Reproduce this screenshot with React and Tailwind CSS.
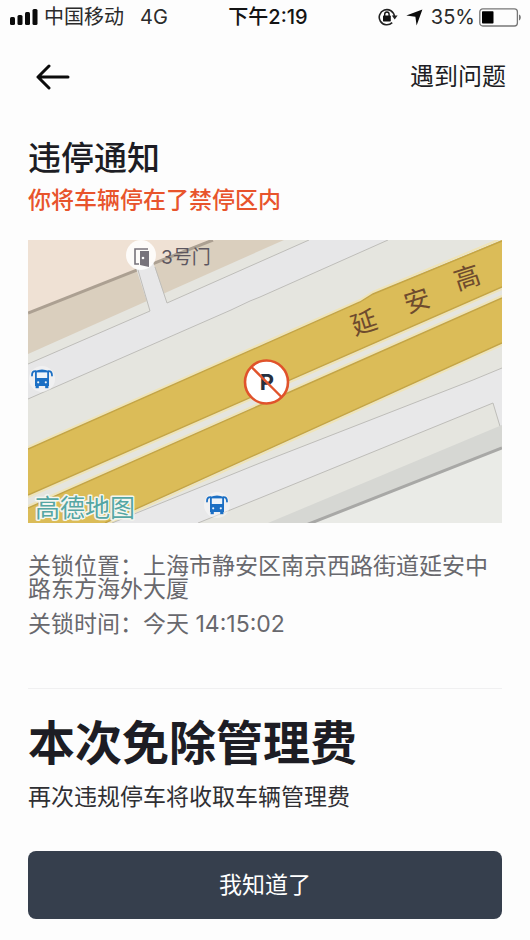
import React from "react";

const CJK = "font-[Inter,'Noto_Sans_CJK_SC',sans-serif]";

function SignalBars() {
  return (
    <svg width="28" height="18" viewBox="0 0 28 18" fill="#0b0b0b" aria-hidden="true">
      <rect x="0" y="9" width="5" height="8" rx="1.5" />
      <rect x="7.5" y="7" width="5" height="10" rx="1.5" />
      <rect x="15" y="4" width="5" height="13" rx="1.5" />
      <rect x="22.5" y="1" width="5" height="16" rx="1.5" />
    </svg>
  );
}

function RotationLock() {
  return (
    <svg width="20" height="18" viewBox="0 0 20 18" fill="none" aria-hidden="true">
      <path d="M14.2 14.6A7.6 7.6 0 1 1 16.4 8.4" stroke="#222" strokeWidth="1.6" />
      <path d="M13.8 7.6h5.8l-2.9 4z" fill="#222" />
      <rect x="5" y="7.6" width="7.8" height="5.8" rx="0.6" fill="#111" />
      <path d="M6.7 8V6.2a2.2 2.2 0 0 1 4.4 0V8" stroke="#111" strokeWidth="1.4" />
    </svg>
  );
}

function LocationArrow() {
  return (
    <svg width="17" height="17" viewBox="0 0 17 17" fill="#0b0b0b" aria-hidden="true">
      <path d="M0.3 6.6 16.4 0.4 10.6 16.4 9.4 7.8z" />
    </svg>
  );
}

function Battery() {
  return (
    <svg width="43" height="19" viewBox="0 0 43 19" fill="none" aria-hidden="true">
      <rect x="0.8" y="0.8" width="37.6" height="17.2" rx="3" stroke="#777" strokeWidth="1.3" />
      <rect x="3" y="3.2" width="11.5" height="12.4" rx="0.8" fill="#000" />
      <path d="M40 6.6c2.4.6 2.4 5.2 0 5.8z" fill="#777" />
    </svg>
  );
}

function BackArrow() {
  return (
    <svg width="34" height="26" viewBox="0 0 34 26" fill="none" stroke="#0b0b0b" strokeWidth="3" strokeLinecap="round" strokeLinejoin="round" aria-hidden="true">
      <path d="M13 2 2 13l11 11M2 13h30" />
    </svg>
  );
}

function Bus({ x, y }) {
  return (
    <g transform={`translate(${x} ${y})`}>
      <circle cx="11" cy="10" r="13" fill="#fff" fillOpacity="0.4" />
      <path d="M4 2Q11-1 18 2V17H4z" fill="#1b6fc4" />
      <path d="M4.5 2.2C2 2.2 1 3.2 1 6.5M17.5 2.2C20 2.2 21 3.2 21 6.5" stroke="#1b6fc4" strokeWidth="1.8" fill="none" strokeLinecap="round" />
      <rect x="5.8" y="3.4" width="10.4" height="5.6" fill="#eef4fa" />
      <circle cx="7.2" cy="13.3" r="1.1" fill="#eef4fa" />
      <circle cx="14.8" cy="13.3" r="1.1" fill="#eef4fa" />
      <rect x="4.6" y="16" width="3.2" height="3.2" fill="#1b6fc4" />
      <rect x="14.2" y="16" width="3.2" height="3.2" fill="#1b6fc4" />
    </g>
  );
}

function ParkingMap() {
  return (
    <svg viewBox="0 0 474 283" className={`block w-full h-auto ${CJK}`} role="img" aria-label="停车位置地图">
      <rect width="474" height="283" fill="#e5e5df" />

      {/* building, top left */}
      <path d="M0 0H256L0 114z" fill="#dacfbe" />
      <path d="M0 0H187L0 74z" fill="#efe1d4" />
      <path d="M0 73 185 0" stroke="#aca092" strokeWidth="3" />

      {/* side street */}
      <path d="M0 124 122 71 108 28 125 22 139 63 281 0H360L232 57 222 62 0 159z" fill="#e7e7e8" />
      <path d="M0 124 122 71 110 30M127 27 139 63 281 0M0 159 203 70 222 61 232 57 360 0" fill="none" stroke="#bebdb9" strokeWidth="1" />

      {/* elevated road */}
      <path d="M0 209 332 62 345 54 474 0V47L0 255z" fill="#dbbc58" />
      <path d="M0 268 474 58V103L77 283H0z" fill="#dbbc58" />
      <path d="M0 207 332 60 345 52 470 0M0 257 474 49M0 266 474 56M82 283 474 105" fill="none" stroke="#efe4b8" strokeWidth="2" />
      <path d="M0 209 332 62 345 54 474 1M0 255 474 47M0 268 474 58M77 283 474 103" fill="none" stroke="#c4a546" strokeWidth="1.4" />

      {/* lower street and kerb */}
      <path d="M84 283 232 223 445 140 474 128V193L465 163 232 258 170 283z" fill="#e8e8e9" />
      <path d="M84 283 232 223 445 140 474 128M170 283 232 258 465 163 474 193" fill="none" stroke="#bebdb9" strokeWidth="1" />
      <path d="M240 283 474 185V208L282 283z" fill="#d6d7d3" />
      <path d="M282 283 474 208V283z" fill="#eaebe7" />
      <path d="M278 285 474 208" stroke="#a8a8a6" strokeWidth="3" />

      {/* gate */}
      <circle cx="113" cy="15" r="15" fill="#fff" fillOpacity="0.85" />
      <path d="M111 24h-4V9h13" fill="none" stroke="#77737b" strokeWidth="1.6" />
      <path d="M112 11h9v16l-9-2z" fill="#77737b" />
      <circle cx="115" cy="18" r="1.3" fill="#fff" />
      <text x="133" y="24" fontSize="19" fill="#5c5660">3号门</text>

      <g fontSize="26" fill="#6e4b2e" textAnchor="middle">
        <text transform="translate(336 83) rotate(-18)" y="9">延</text>
        <text transform="translate(389 61) rotate(-18)" y="9">安</text>
        <text transform="translate(439 38) rotate(-18)" y="9">高</text>
      </g>

      <Bus x={3} y={129} />
      <Bus x={178} y={255} />

      {/* no parking marker */}
      <circle cx="238.5" cy="142" r="21.5" fill="#fff" stroke="#e0532b" strokeWidth="2.6" />
      <text x="239" y="150" fontSize="22" fontWeight="700" fill="#26303f" textAnchor="middle">P</text>
      <path d="M223.5 127 253.5 157" stroke="#e0532b" strokeWidth="2.4" />

      <text x="7" y="277" fontSize="25" fill="#55a6a4" stroke="#f4f6f0" strokeWidth="3" strokeLinejoin="round" paintOrder="stroke">高德地图</text>
    </svg>
  );
}

export default function App() {
  return (
    <div className={`min-h-screen bg-[#fdfdfd] text-[#1d1d24] ${CJK}`}>
      <div className="grid grid-cols-[1fr_auto_1fr] items-center h-[34px] pl-[10px] pr-2 text-[20px] leading-8 text-[#2b2b2b]">
        <div className="flex items-center gap-[6px]">
          <SignalBars />
          <span>中国移动</span>
          <span className="ml-[10px]">4G</span>
        </div>
        <div className="pl-1 font-medium text-[#141414]">下午2:19</div>
        <div className="flex items-center justify-end gap-1">
          <RotationLock />
          <span className="mx-1"><LocationArrow /></span>
          <span>35%</span>
          <Battery />
        </div>
      </div>

      <header className="flex items-center justify-between h-[86px] pl-9 pr-6">
        <button type="button" aria-label="返回"><BackArrow /></button>
        <a href="#help" className="text-[24px] leading-8">遇到问题</a>
      </header>

      <main className="px-7 pt-4 pb-5 text-[23px]">
        <h1 className="text-[33px] leading-[44px] font-medium">违停通知</h1>
        <p className="mt-1 leading-8 font-medium text-[#e8542c]">你将车辆停在了禁停区内</p>

        <div className="mt-6">
          <ParkingMap />
        </div>

        <div className="mt-8 leading-[23px] text-[#68686d]">
          <p>关锁位置：上海市静安区南京西路街道延安中路东方海外大厦</p>
          <p className="mt-3">关锁时间：今天 14:15:02</p>
        </div>

        <hr className="mt-[52px] border-[#f0f0f1]" />

        <h2 className="mt-[26px] text-[47px] leading-[56px] font-bold">本次免除管理费</h2>
        <p className="mt-[10px] leading-8 text-[#2f2f33]">再次违规停车将收取车辆管理费</p>

        <button type="button" className="mt-[38px] w-full h-[68px] rounded-lg bg-[#363f4d] text-white">我知道了</button>
      </main>
    </div>
  );
}
